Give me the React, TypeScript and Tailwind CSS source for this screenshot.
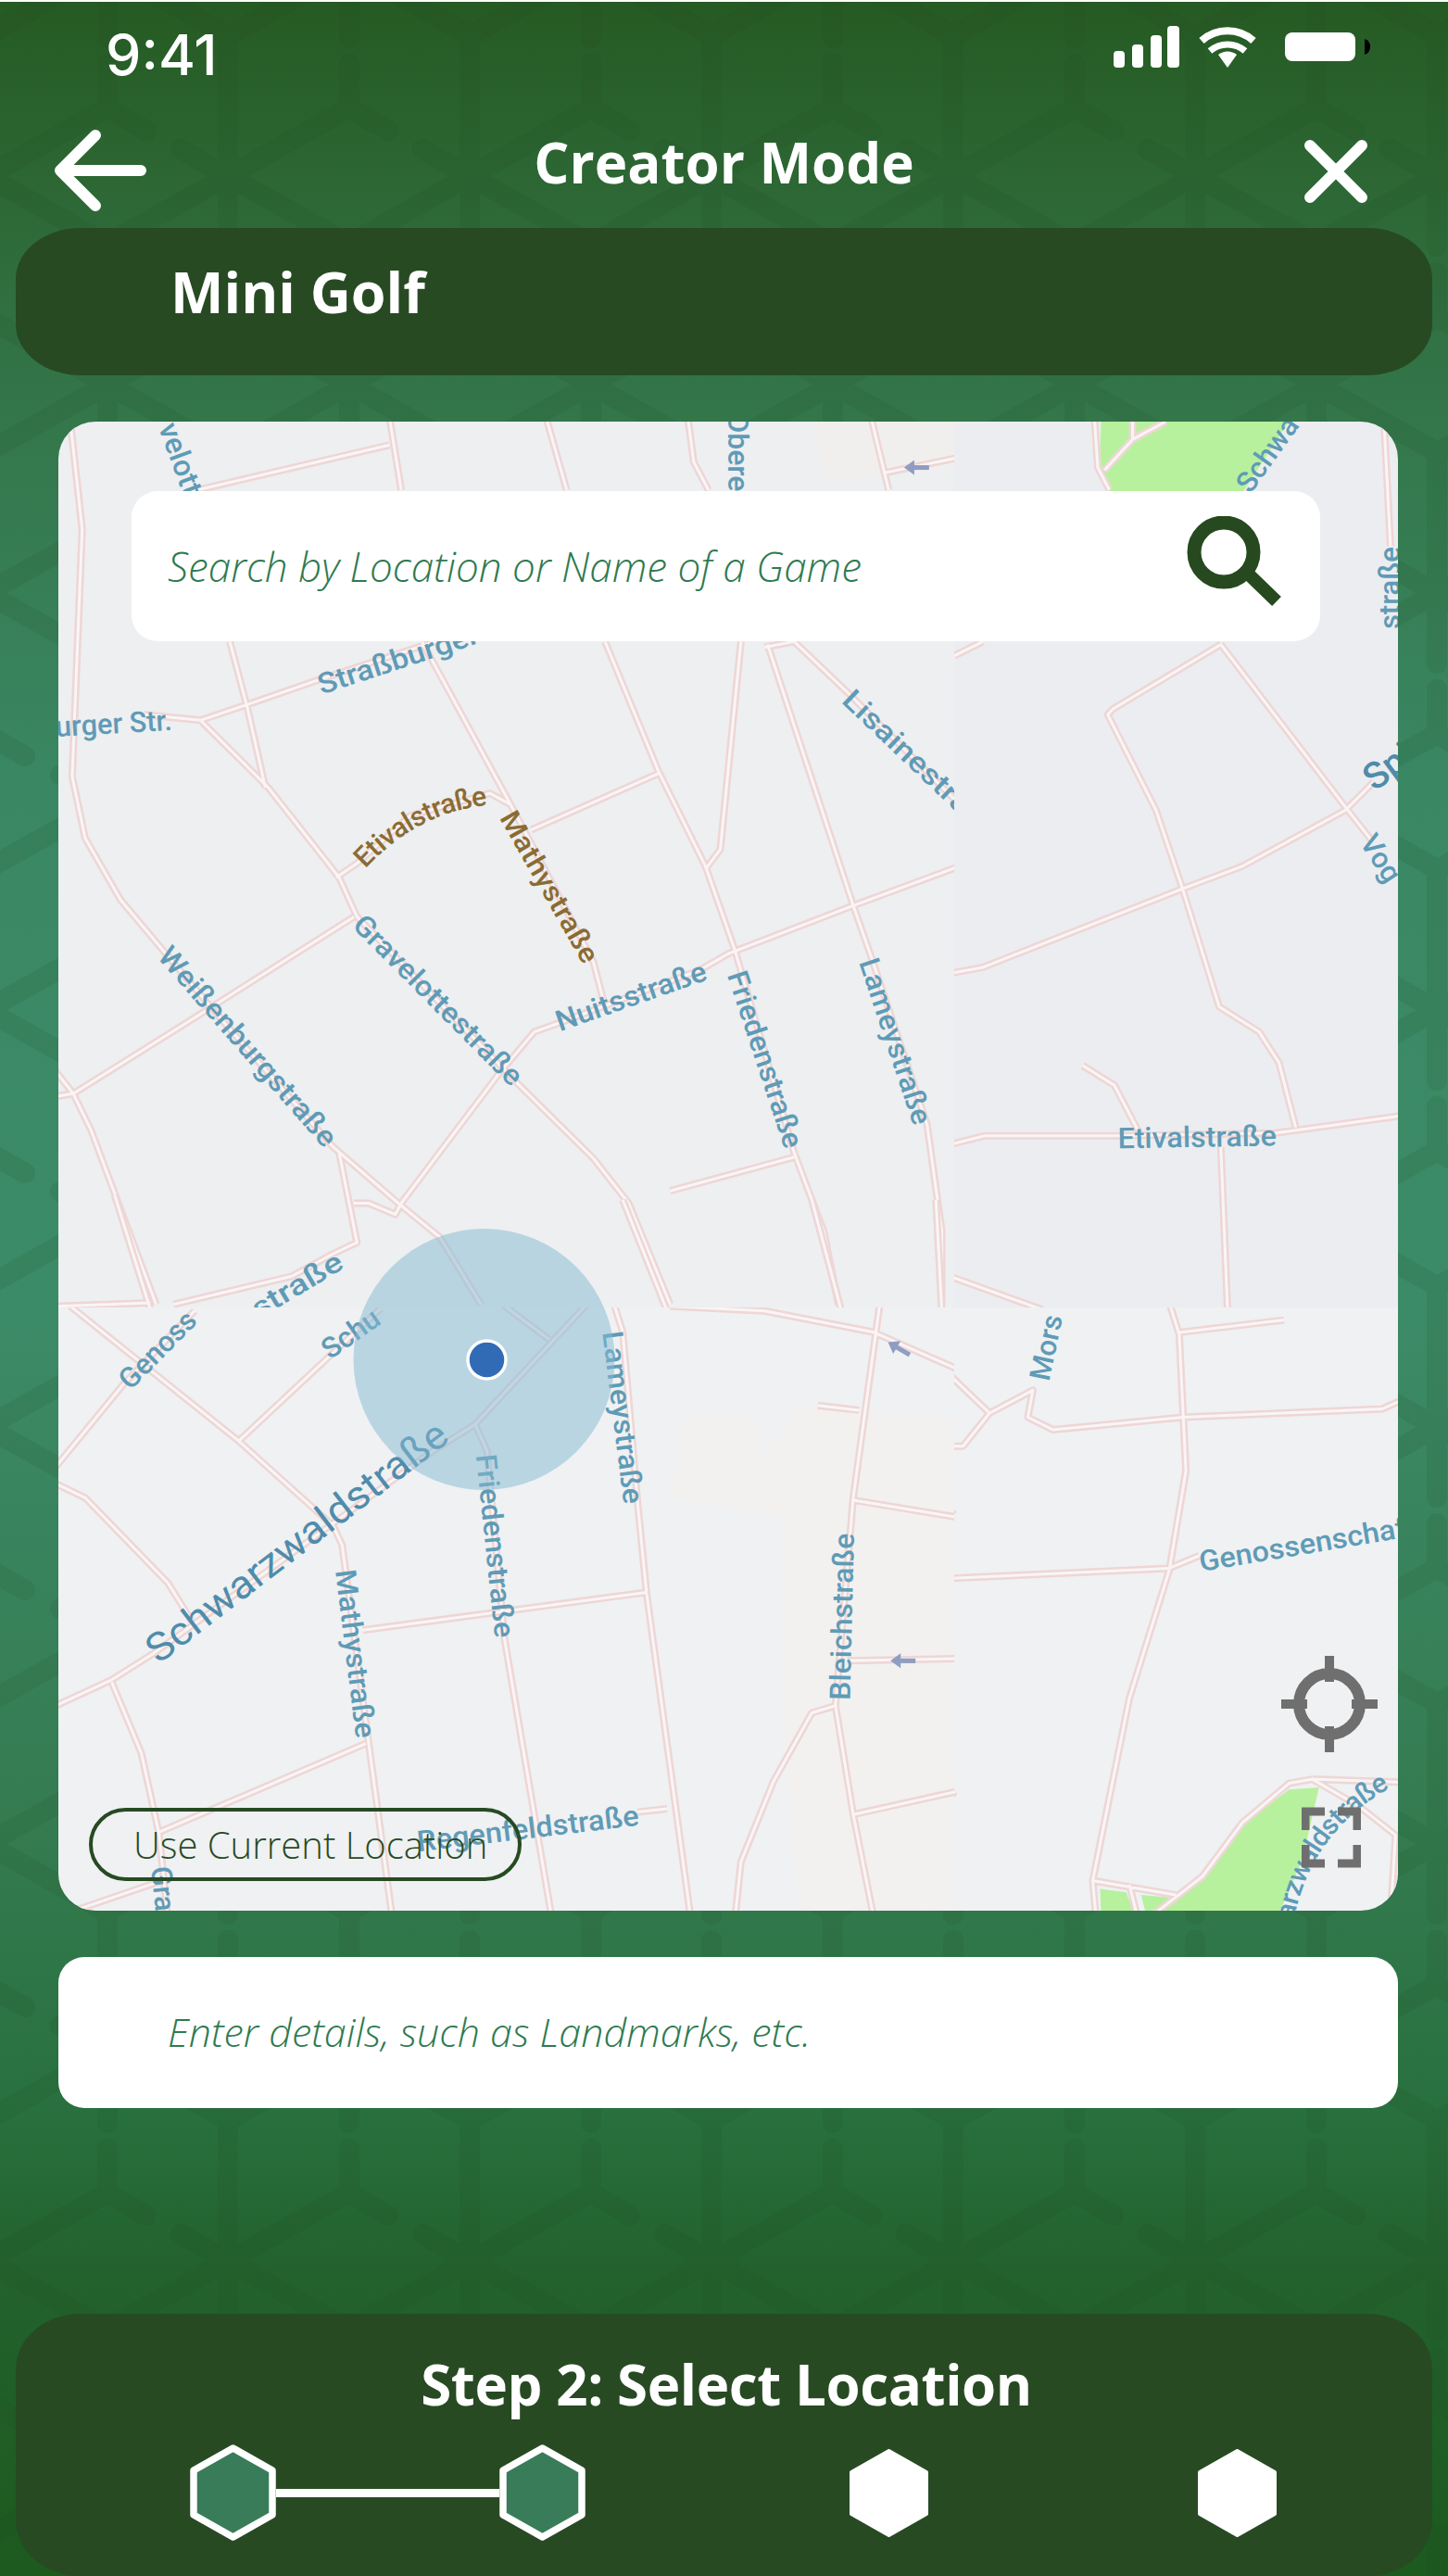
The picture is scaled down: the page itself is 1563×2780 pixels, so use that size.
import React from "react";

type Fn = (x: number, y: number) => [number, number];
const c2: Fn = (x, y) => [60 + x / 1.568, 450 + y / 1.65];
const c3: Fn = (x, y) => [60 + x / 1.568, 1300 + y / 1.96];
const c4: Fn = (x, y) => [1000 + x / 2.785, 450 + y / 1.65];
const c5: Fn = (x, y) => [1000 + x / 2.785, 1400 + y / 2.24];

const toD = (fn: Fn, f: number[]) => {
  let d = "";
  for (let i = 0; i < f.length; i += 2) {
    const [x, y] = fn(f[i], f[i + 1]);
    d += `${i === 0 ? "M" : "L"}${x.toFixed(1)} ${y.toFixed(1)} `;
  }
  return d;
};

const R2 = [
  [25, 8, 45, 200, 28, 640, 50, 750, 110, 860, 190, 960, 270, 1060, 470, 1300, 580, 1400, 650, 1460, 720, 1580],
  [240, 130, 565, 50],
  [565, 0, 585, 130],
  [830, 0, 865, 130],
  [1070, 0, 1080, 80, 1105, 130],
  [1380, 0, 1410, 130],
  [1400, 100, 1530, 72],
  [295, 400, 325, 520, 355, 660],
  [245, 540, 330, 510, 440, 470, 700, 380],
  [150, 530, 245, 540, 360, 660, 480, 820, 510, 890, 785, 1190, 910, 1320, 970, 1400, 1040, 1580],
  [620, 400, 770, 690, 910, 970, 930, 1050],
  [475, 820, 510, 795, 600, 710, 735, 670, 770, 690],
  [805, 735, 1020, 635],
  [930, 400, 1020, 630, 1100, 800, 1150, 950, 1250, 1310, 1300, 1450, 1325, 1580],
  [1160, 400, 1125, 770, 1100, 805],
  [1205, 405, 1350, 870, 1380, 960, 1475, 1260, 1500, 1450, 1500, 1580],
  [1200, 410, 1250, 400, 1340, 490, 1530, 690],
  [1530, 800, 1350, 870, 1140, 955, 1090, 985, 850, 1080, 810, 1095, 750, 1170, 585, 1400, 575, 1420, 530, 1400, 505, 1400],
  [505, 890, 250, 1060, 30, 1205, 0, 1210],
  [0, 1165, 30, 1205, 60, 1270, 170, 1580],
  [1040, 1378, 1250, 1318],
  [480, 1310, 510, 1470, 470, 1490, 400, 1530, 200, 1580],
];
const R3up = [
  [100, -20, 160, 220],
  [0, 215, 160, 208],
  [960, -10, 1035, 225],
  [1280, -10, 1330, 225],
  [1490, -10, 1500, 225],
];
const R3 = [
  [25, 215, 310, 500, 470, 680, 485, 720, 530, 1140, 570, 1510],
  [0, 1060, 95, 1005, 165, 950, 640, 520, 710, 465, 900, 210],
  [755, 210, 835, 285],
  [710, 465, 730, 520, 760, 920, 840, 1510],
  [945, 210, 960, 270, 985, 630, 1000, 820, 1075, 1510],
  [520, 900, 1000, 820],
  [310, 500, 550, 220],
  [0, 555, 115, 380, 235, 225],
  [0, 590, 50, 620, 190, 800, 230, 880],
  [95, 1010, 145, 1160, 175, 1330, 190, 1510],
  [170, 1330, 525, 1140],
  [40, 1490, 180, 1430],
  [985, 1285, 1035, 1278],
  [1395, 210, 1350, 620, 1320, 1060, 1350, 1290, 1385, 1510],
  [1290, 425, 1360, 435],
  [1350, 625, 1530, 662],
  [1040, 215, 1200, 225, 1385, 270, 1530, 350],
  [1320, 1060, 1280, 1075, 1215, 1220, 1160, 1390, 1150, 1510],
  [1350, 1290, 1530, 1240],
  [1340, 965, 1530, 960],
];
const R4 = [
  [505, 0, 515, 90, 550, 130],
  [535, 95, 620, 40, 720, 8],
  [620, 8, 620, 40],
  [1375, 0, 1395, 230],
  [84, 425, 170, 400],
  [885, 405, 560, 520, 545, 530, 690, 700, 770, 840, 880, 1050, 1000, 1095, 1060, 1150, 1110, 1265],
  [885, 405, 1260, 695, 1340, 755],
  [60, 992, 170, 980, 770, 840, 950, 800, 1260, 700, 1345, 650],
  [470, 1155, 565, 1190, 640, 1275],
  [60, 1297, 175, 1280, 570, 1280, 1050, 1275, 1420, 1245],
  [885, 1300, 905, 1590],
  [60, 1528, 350, 1590],
  [0, 1250, 40, 1450, 50, 1590],
];
const R5 = [
  [725, 0, 760, 90, 780, 420, 730, 660, 610, 970, 500, 1410, 510, 1500],
  [760, 85, 1075, 55],
  [60, 180, 190, 280],
  [60, 360, 110, 360, 190, 280, 320, 225, 305, 290, 380, 320, 770, 290, 1370, 270, 1420, 252],
  [60, 680, 730, 655, 820, 625],
  [500, 1410, 750, 1445],
  [1160, 1165, 1300, 1230, 1410, 1300, 1395, 1500],
  [1160, 1165, 1420, 1172],
  [1160, 1165, 1090, 1175, 950, 1270, 830, 1400, 670, 1500],
  [610, 1420, 635, 1500],
  [60, 510, 84, 526],
  [60, 870, 84, 872],
  [60, 1220, 84, 1195],
];

type L = { t: string; a: [number, number]; b: [number, number]; s?: number; fill?: string; free?: boolean };
const lab = (fn: Fn, t: string, x1: number, y1: number, x2: number, y2: number, s = 31, fill = "#5f9bb6", free = false): L => ({
  t,
  a: fn(x1, y1),
  b: fn(x2, y2),
  s,
  fill,
  free,
});
const blue = "#5f9bb6";
const brown = "#8a6c33";
const L2 = [
  lab(c2, "velott", 190, 12, 233, 135, 32, blue, true),
  lab(c2, "Obere", 1155, -8, 1155, 135, 32, blue, true),
  lab(c2, "Straßburger", 445, 478, 715, 385),
  lab(c2, "urger Str.", 0, 552, 197, 540),
  lab(c2, "Mathystraße", 765, 705, 908, 968, 30, brown),
  lab(c2, "Gravelottestraße", 512, 895, 783, 1182),
  lab(c2, "Weißenburgstraße", 183, 950, 467, 1292),
  lab(c2, "Nuitsstraße", 848, 1078, 1100, 985),
  lab(c2, "Friedenstraße", 1152, 988, 1250, 1300),
  lab(c2, "Lameystraße", 1375, 965, 1468, 1258),
  lab(c2, "Lisainestraße", 1340, 495, 1590, 745),
  lab(c3, "straße", 335, 225, 482, 115),
];
const L3 = [
  lab(c3, "Genoss", 115, 380, 245, 215, 31, blue, true),
  lab(c3, "Schu", 455, 312, 565, 215, 31, blue, true),
  lab(c3, "Friedenstraße", 728, 528, 760, 915, 31),
  lab(c3, "Mathystraße", 490, 772, 525, 1128, 31),
  lab(c3, "Lameystraße", 942, 268, 978, 632, 31),
  lab(c3, "Bleichstraße", 1328, 1048, 1335, 695, 31),
  lab(c3, "Regenfeldstraße", 612, 1348, 987, 1292, 31),
  lab(c3, "Gra", 178, 1400, 188, 1520, 31, blue, true),
  lab(c3, "G", 1155, 1490, 1155, 1530, 31, blue, true),
];
const L4 = [
  lab(c4, "Schwa", 950, 128, 1115, -8, 31, blue, true),
  lab(c4, "Spi", 1325, 650, 1440, 600, 40, "#4f8cab", true),
  lab(c4, "Vog", 1325, 748, 1425, 840, 31, blue, true),
  lab(c4, "straße", 1393, 378, 1393, 200, 31, blue, true),
  lab(c4, "Etivalstraße", 575, 1285, 1052, 1280, 31),
];
const L5 = [
  lab(c5, "Mors", 340, 200, 395, -10, 31, blue, true),
  lab(c5, "Genossenschaft", 820, 640, 1470, 552, 31),
];

function Label({ l }: { l: L }) {
  const dx = l.b[0] - l.a[0];
  const dy = l.b[1] - l.a[1];
  const len = Math.hypot(dx, dy);
  const ang = (Math.atan2(dy, dx) * 180) / Math.PI;
  return (
    <text
      transform={`translate(${l.a[0]} ${l.a[1]}) rotate(${ang})`}
      textLength={l.free ? undefined : len}
      lengthAdjust="spacingAndGlyphs"
      dominantBaseline="central"
      fontSize={l.s}
      fontWeight={500}
      fill={l.fill}
      style={{ fontFamily: "Roboto, sans-serif" }}
    >
      {l.t}
    </text>
  );
}

function Roads({ list, fn }: { list: number[][]; fn: Fn }) {
  const d = list.map((r) => toD(fn, r)).join("");
  return (
    <g fill="none" strokeLinejoin="round" filter="url(#soft)">
      <path d={d} stroke="#eed6d6" strokeWidth={8} />
      <path d={d} stroke="#f9f5f5" strokeWidth={3} />
    </g>
  );
}

function Arrow({ p, flip = 180 }: { p: [number, number]; flip?: number }) {
  return (
    <g transform={`translate(${p[0]} ${p[1]}) rotate(${flip})`} fill="#8f9dc2">
      <rect x={-13} y={-2.5} width={18} height={5} />
      <polygon points="3,-8 14,0 3,8" />
    </g>
  );
}

function MapArt() {
  return (
    <svg viewBox="63 455 1446 1607" width={1446} height={1607} className="absolute inset-0 block">
      <defs>
        <filter id="soft" x="0" y="0" width="1700" height="2300" filterUnits="userSpaceOnUse">
          <feGaussianBlur stdDeviation="0.6" />
        </filter>
        <clipPath id="tl"><rect x={63} y={455} width={967} height={956} /></clipPath>
        <clipPath id="tr"><rect x={1030} y={455} width={479} height={956} /></clipPath>
        <clipPath id="bl"><rect x={63} y={1411} width={967} height={651} /></clipPath>
        <clipPath id="br"><rect x={1030} y={1411} width={479} height={651} /></clipPath>
        <path id="etiv" d={`M${c2(512, 792).join(" ")} Q${c2(610, 680).join(" ")} ${c2(745, 672).join(" ")}`} />
        <path id="schw" d={`M${c5(1075, 1500).join(" ")} Q${c5(1130, 1270).join(" ")} ${c5(1400, 1155).join(" ")}`} />
      </defs>

      <g clipPath="url(#tl)">
        <rect x={63} y={455} width={967} height={956} fill="#edeff1" />
        <polygon points={[[1280, 8], [1520, 8], [1520, 90], [1300, 115]].map(([x, y]) => c2(x, y).join(",")).join(" ")} fill="#f1efed" />
        <Roads list={R2} fn={c2} />
        <Roads list={R3up} fn={c3} />
        {L2.map((l) => <Label key={l.t + l.a[0]} l={l} />)}
        <text fontSize={30} fontWeight={500} fill={brown} dominantBaseline="central" style={{ fontFamily: "Roboto, sans-serif" }}>
          <textPath href="#etiv">Etivalstraße</textPath>
        </text>
        <Arrow p={c2(1458, 90)} />
      </g>

      <g clipPath="url(#tr)">
        <rect x={1030} y={455} width={479} height={956} fill="#ecedf0" />
        <polygon points={[[525, 8], [1090, 8], [950, 135], [550, 135], [520, 90]].map(([x, y]) => c4(x, y).join(",")).join(" ")} fill="#b7f19e" />
        <Roads list={R4} fn={c4} />
        {L4.map((l) => <Label key={l.t + l.a[0]} l={l} />)}
      </g>

      <g clipPath="url(#bl)">
        <rect x={63} y={1411} width={967} height={651} fill="#eff1f3" />
        <polygon
          points={[[1040, 620], [1065, 450], [1180, 450], [1200, 530], [1260, 430], [1530, 450], [1530, 1510], [1260, 1510], [1230, 1100], [1230, 660]].map(([x, y]) => c3(x, y).join(",")).join(" ")}
          fill="#f2f1ef"
        />
        <Roads list={R3} fn={c3} />
        {L3.map((l) => <Label key={l.t + l.a[0]} l={l} />)}
        <g transform={`translate(${c3(160, 950).join(" ")}) rotate(-37.5)`}>
          <text dominantBaseline="central" fontSize={43} fontWeight={400} fill="#4f8cab" textLength={398} lengthAdjust="spacingAndGlyphs" style={{ fontFamily: "Roboto, sans-serif" }}>
            Schwarzwaldstraße
          </text>
        </g>
        <Arrow p={c3(1428, 305)} flip={-150} />
        <Arrow p={c3(1435, 965)} />
      </g>

      <g clipPath="url(#br)">
        <rect x={1030} y={1411} width={479} height={651} fill="#eff1f3" />
        <polygon points={[[1180, 1185], [1090, 1190], [960, 1270], [830, 1400], [680, 1490], [1060, 1490], [1130, 1360]].map(([x, y]) => c5(x, y).join(",")).join(" ")} fill="#b7f19e" />
        <polygon points={[[522, 1430], [600, 1438], [625, 1490], [525, 1490]].map(([x, y]) => c5(x, y).join(",")).join(" ")} fill="#b7f19e" />
        <polygon points={[[645, 1445], [750, 1452], [660, 1490]].map(([x, y]) => c5(x, y).join(",")).join(" ")} fill="#b7f19e" />
        <polygon points={[[0, 1230], [84, 1220], [84, 1490], [0, 1490]].map(([x, y]) => c5(x, y).join(",")).join(" ")} fill="#f2f1ef" />
        <Roads list={R5} fn={c5} />
        {L5.map((l) => <Label key={l.t + l.a[0]} l={l} />)}
        <text fontSize={30} fontWeight={500} fill={blue} dominantBaseline="central" style={{ fontFamily: "Roboto, sans-serif" }}>
          <textPath href="#schw">arzwaldstraße</textPath>
        </text>
      </g>

      <circle cx={522.5} cy={1467} r={141} fill="#84bad2" opacity={0.5} />
      <circle cx={525.5} cy={1467.5} r={20.5} fill="#326bb5" stroke="#ffffff" strokeWidth={3.5} />
    </svg>
  );
}

function Pattern() {
  let d = "";
  const motif = (x: number, y: number) => {
    d += `M${x} ${y - 152}L${x} ${y + 76} `;
    d += `M${x} ${y}L${x + 130} ${y - 73} `;
    d += `M${x} ${y}L${x - 51} ${y - 29} `;
    d += `M${x - 130} ${y + 73}L${x} ${y}L${x + 130} ${y + 73} `;
    d += `M${x} ${y + 104}L${x} ${y + 152}L${x + 42} ${y + 176} `;
  };
  for (let r = -1; r < 8; r++) {
    for (let k = -1; k < 7; k++) {
      motif(246 + 261 * k, 2440 - 450 * r);
      motif(116 + 261 * k, 2215 - 450 * r);
    }
  }
  return (
    <svg viewBox="0 0 1563 2780" width={1563} height={2780} className="absolute inset-0">
      <path d={d} fill="none" stroke="#234a20" strokeWidth={22} strokeLinecap="round" strokeLinejoin="round" opacity={0.12} />
    </svg>
  );
}

function Hex({ outline }: { outline?: boolean }) {
  if (outline) {
    return (
      <svg width={93} height={104} viewBox="0 0 93 104" className="shrink-0">
        <polygon points="46.5,4 89,28 89,76 46.5,100 4,76 4,28" fill="#397c59" stroke="#ffffff" strokeWidth={7.5} strokeLinejoin="round" />
      </svg>
    );
  }
  return (
    <svg width={85} height={95} viewBox="0 0 85 95" className="shrink-0">
      <polygon points="42.5,2 83,25 83,70 42.5,93 2,70 2,25" fill="#ffffff" stroke="#ffffff" strokeWidth={4} strokeLinejoin="round" />
    </svg>
  );
}

export default function App() {
  const sans = "font-['Open_Sans',sans-serif]";
  return (
    <div className={`relative flex h-[2780px] w-[1563px] flex-col overflow-hidden bg-[linear-gradient(180deg,#265a22_0%,#337548_15%,#3a8763_30%,#3c8b68_50%,#357c52_70%,#28703e_82%,#23622e_88%,#1c5a1e_100%)] ${sans}`}>
      <Pattern />
      <div className="relative flex h-full flex-col">
        <div className="h-[2px] bg-white" />
        <div className="flex h-[114px] items-start justify-between pl-[114px] pr-[83px]">
          <div className="pt-[27px] font-['Inter',sans-serif] text-[61px] font-medium leading-[60px] text-white">9:41</div>
          <svg width={278} height={46} viewBox="0 0 278 46" className="mt-[25px]">
            <rect x={0} y={28} width={12} height={18} rx={4} fill="#fff" />
            <rect x={20} y={21} width={12} height={25} rx={4} fill="#fff" />
            <rect x={40} y={11} width={12} height={35} rx={4} fill="#fff" />
            <rect x={58} y={1} width={13} height={45} rx={4} fill="#fff" />
            <path d="M95 17 A42 42 0 0 1 151 17" fill="none" stroke="#fff" strokeWidth={8} />
            <path d="M104 28 A29 29 0 0 1 142 28" fill="none" stroke="#fff" strokeWidth={7} />
            <path d="M123 46 L113 32 A16 16 0 0 1 133 32 Z" fill="#fff" />
            <rect x={185} y={8} width={76} height={31} rx={8} fill="#fff" />
            <path d="M271 15 A9 9 0 0 1 271 32 Z" fill="#000" />
          </svg>
        </div>

        <div className="grid h-[130px] grid-cols-[1fr_auto_1fr] items-center">
          <svg width={110} height={90} viewBox="0 0 110 90" className="ml-[55px] mt-[6px]">
            <path d="M97 45 H12 M48 7 L10 45 L48 83" fill="none" stroke="#fff" strokeWidth={12} strokeLinecap="round" strokeLinejoin="round" />
          </svg>
          <div className="mb-[12px] text-[60px] font-bold leading-[80px] text-white">Creator Mode</div>
          <svg width={70} height={70} viewBox="0 0 70 70" className="mr-[86px] mt-[8px] justify-self-end">
            <path d="M7 7 L63 63 M63 7 L7 63" fill="none" stroke="#fff" strokeWidth={12} strokeLinecap="round" />
          </svg>
        </div>

        <div className="mx-[17px] h-[159px] rounded-[70px/55px] bg-[#274a23] pl-[167px] pt-[29px] text-[61px] font-bold leading-[80px] text-white">
          Mini Golf
        </div>

        <div className="relative ml-[63px] mr-[54px] mt-[50px] h-[1607px] overflow-hidden rounded-[40px]">
          <MapArt />
          <div className="absolute left-[79px] top-[75px] flex h-[162px] w-[1283px] items-center justify-between rounded-[28px] bg-white pl-[39px] pr-[42px]">
            <span className="text-[44px] font-light italic text-[#2f7a50]">Search by Location or Name of a Game</span>
            <svg width={102} height={100} viewBox="0 0 102 100" className="mb-[8px]">
              <circle cx={40} cy={39} r={32} fill="none" stroke="#26491f" strokeWidth={15} />
              <path d="M66 62 L97 92" fill="none" stroke="#26491f" strokeWidth={14} />
            </svg>
          </div>
          <div className="absolute left-[33px] top-[1496px] flex h-[79px] w-[467px] items-center rounded-full border-[4px] border-[#274a23] pl-[44px] text-[40px] font-light text-[#274a23]">
            Use Current Location
          </div>
          <svg width={104} height={104} viewBox="0 0 104 104" className="absolute left-[1320px] top-[1332px]">
            <circle cx={52} cy={52} r={33} fill="none" stroke="#6f6f6f" strokeWidth={12} />
            <path d="M52 0 V28 M52 76 V104 M0 52 H28 M76 52 H104" stroke="#6f6f6f" strokeWidth={10} />
          </svg>
          <svg width={64} height={66} viewBox="0 0 64 66" className="absolute left-[1342px] top-[1495px]">
            <path d="M25 5 H4 V25 M39 5 H60 V25 M25 61 H4 V41 M39 61 H60 V41" fill="none" stroke="#6f6f6f" strokeWidth={9} />
          </svg>
        </div>

        <div className="ml-[63px] mr-[54px] mt-[50px] flex h-[163px] items-center rounded-[28px] bg-white pl-[118px] text-[43px] font-light italic text-[#2f7a50]">
          Enter details, such as Landmarks, etc.
        </div>

        <div className="mx-[17px] mt-[222px] h-[283px] rounded-[70px/60px] bg-[#274a23] pl-[5px] pt-[36px]">
          <div className="text-center text-[60px] font-bold leading-[80px] tracking-[-0.4px] text-white">Step 2: Select Location</div>
          <div className="-ml-[5px] mt-[25px] flex items-center pl-[188px]">
            <Hex outline />
            <div className="h-[9px] w-[241px] bg-white" />
            <Hex outline />
            <div className="w-[285px]" />
            <Hex />
            <div className="w-[291px]" />
            <Hex />
          </div>
        </div>
      </div>
    </div>
  );
}
